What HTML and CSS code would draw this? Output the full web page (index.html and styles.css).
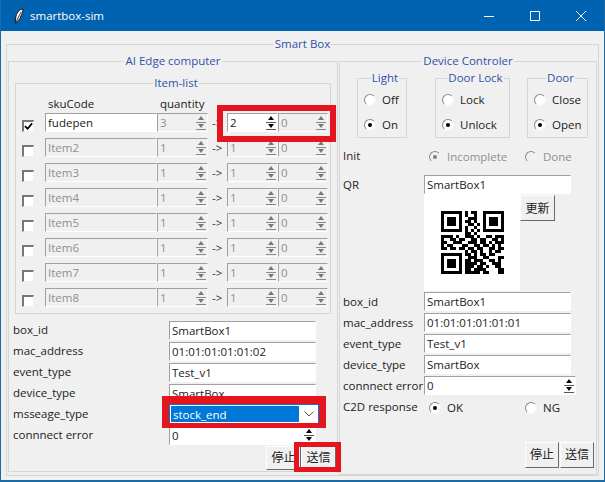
FILE: index.html
```html
<!DOCTYPE html>
<html lang="en">
<head>
  <meta charset="UTF-8" />
  <title>smartbox-sim</title>
  <link rel="stylesheet" href="styles.css">
</head>
<body>
  <div class="window">
    <div class="titlebar">
      <svg class="feather" width="10" height="16" viewBox="0 0 10 16"><path d="M9 1C6 1 3 4 2 8L1 15 2 15C3 13 6 12 7 8 8 6 9 3 9 1Z" fill="#fff" stroke="#111" stroke-width="1"/><path d="M7 4L2 14" stroke="#111" stroke-width=".8"/></svg>
      <span class="app-name">smartbox-sim</span>
      <svg class="win-btn" width="10" height="10" viewBox="0 0 10 10"><path d="M0 5.5h10" stroke="#fff"/></svg>
      <svg class="win-btn" width="10" height="10" viewBox="0 0 10 10"><path d="M.5.5h9v9h-9z" fill="none" stroke="#fff"/></svg>
      <svg class="win-btn" width="10" height="10" viewBox="0 0 10 10"><path d="M0 0l10 10M10 0L0 10" stroke="#fff"/></svg>
    </div>

    <fieldset class="group smartbox">
      <legend>Smart Box</legend>
      <div class="columns">

        <fieldset class="group edge">
          <legend>AI Edge computer</legend>
          <fieldset class="group item-list">
            <legend>Item-list</legend>
            <div class="item-head"><span></span><span class="sku-title">skuCode</span><span class="qty-title">quantity</span></div>
            <div class="items">
              <span class="check on"><svg width="10" height="9" viewBox="0 0 10 9"><path d="M1 4l3 3 5-6" fill="none" stroke="#000" stroke-width="2"/></svg></span>
              <div class="entry">fudepen</div>
              <div class="entry spin off">3<span class="arrows"><i></i><i></i></span></div>
              <span class="dash">-&gt;</span>
              <div class="entry spin">2<span class="arrows"><i></i><i></i></span></div>
              <div class="entry spin off">0<span class="arrows"><i></i><i></i></span></div>

              <span class="check"></span><div class="entry off">Item2</div>
              <div class="entry spin off">1<span class="arrows"><i></i><i></i></span></div><span class="dash">-&gt;</span>
              <div class="entry spin off">1<span class="arrows"><i></i><i></i></span></div>
              <div class="entry spin off">0<span class="arrows"><i></i><i></i></span></div>

              <span class="check"></span><div class="entry off">Item3</div>
              <div class="entry spin off">1<span class="arrows"><i></i><i></i></span></div><span class="dash">-&gt;</span>
              <div class="entry spin off">1<span class="arrows"><i></i><i></i></span></div>
              <div class="entry spin off">0<span class="arrows"><i></i><i></i></span></div>

              <span class="check"></span><div class="entry off">Item4</div>
              <div class="entry spin off">1<span class="arrows"><i></i><i></i></span></div><span class="dash">-&gt;</span>
              <div class="entry spin off">1<span class="arrows"><i></i><i></i></span></div>
              <div class="entry spin off">0<span class="arrows"><i></i><i></i></span></div>

              <span class="check"></span><div class="entry off">Item5</div>
              <div class="entry spin off">1<span class="arrows"><i></i><i></i></span></div><span class="dash">-&gt;</span>
              <div class="entry spin off">1<span class="arrows"><i></i><i></i></span></div>
              <div class="entry spin off">0<span class="arrows"><i></i><i></i></span></div>

              <span class="check"></span><div class="entry off">Item6</div>
              <div class="entry spin off">1<span class="arrows"><i></i><i></i></span></div><span class="dash">-&gt;</span>
              <div class="entry spin off">1<span class="arrows"><i></i><i></i></span></div>
              <div class="entry spin off">0<span class="arrows"><i></i><i></i></span></div>

              <span class="check"></span><div class="entry off">Item7</div>
              <div class="entry spin off">1<span class="arrows"><i></i><i></i></span></div><span class="dash">-&gt;</span>
              <div class="entry spin off">1<span class="arrows"><i></i><i></i></span></div>
              <div class="entry spin off">0<span class="arrows"><i></i><i></i></span></div>

              <span class="check"></span><div class="entry off">Item8</div>
              <div class="entry spin off">1<span class="arrows"><i></i><i></i></span></div><span class="dash">-&gt;</span>
              <div class="entry spin off">1<span class="arrows"><i></i><i></i></span></div>
              <div class="entry spin off">0<span class="arrows"><i></i><i></i></span></div>
            </div>
          </fieldset>

          <div class="form edge-form">
            <span>box_id</span><div class="entry">SmartBox1</div>
            <span>mac_address</span><div class="entry">01:01:01:01:01:02</div>
            <span>event_type</span><div class="entry">Test_v1</div>
            <span>device_type</span><div class="entry">SmartBox</div>
            <span>msseage_type</span>
            <div class="combo"><span class="combo-value">stock_end</span><svg width="10" height="6" viewBox="0 0 10 6"><path d="M.5.5L5 5 9.500.5" fill="none" stroke="#555"/></svg></div>
            <span>connnect error</span><div class="entry spin">0<span class="arrows"><i></i><i></i></span></div>
          </div>
          <div class="actions edge-actions">
            <button>停止</button>
            <button class="send">送信</button>
          </div>
        </fieldset>

        <fieldset class="group device">
          <legend>Device Controler</legend>
          <div class="switches">
            <fieldset class="group switch light">
              <legend>Light</legend>
              <label><span class="radio"></span>Off</label>
              <label><span class="radio on"></span>On</label>
            </fieldset>
            <fieldset class="group switch lock">
              <legend>Door Lock</legend>
              <label><span class="radio"></span>Lock</label>
              <label><span class="radio on"></span>Unlock</label>
            </fieldset>
            <fieldset class="group switch door">
              <legend>Door</legend>
              <label><span class="radio"></span>Close</label>
              <label><span class="radio on"></span>Open</label>
            </fieldset>
          </div>

          <div class="form choice-row init-row">
            <span>Init</span>
            <label class="muted"><span class="radio on"></span>Incomplete</label>
            <label class="muted"><span class="radio"></span>Done</label>
          </div>

          <div class="form qr-form">
            <span>QR</span><div class="entry">SmartBox1</div>
            <span></span>
            <div class="qr-row">
              <div class="qr">
                <svg width="63" height="63" viewBox="0 0 21 21" shape-rendering="crispEdges"><path stroke="#000" d="M0 .5h7M8 .5h1M10 .5h2M14 .5h7M0 1.500h1M6 1.500h1M8 1.500h1M11 1.500h1M14 1.500h1M20 1.500h1M0 2.500h1M2 2.500h3M6 2.500h1M9 2.500h3M14 2.500h1M16 2.500h3M20 2.500h1M0 3.500h1M2 3.500h3M6 3.500h1M8 3.500h2M11 3.500h1M14 3.500h1M16 3.500h3M20 3.500h1M0 4.500h1M2 4.500h3M6 4.500h1M9 4.500h2M12 4.500h1M14 4.500h1M16 4.500h3M20 4.500h1M0 5.500h1M6 5.500h1M8 5.500h1M11 5.500h1M14 5.500h1M20 5.500h1M0 6.500h7M8 6.500h1M10 6.500h1M12 6.500h1M14 6.500h7M8 7.500h2M11 7.500h1M0 8.500h4M5 8.500h1M8 8.500h3M12 8.500h1M15 8.500h2M18 8.500h3M0 9.500h1M3 9.500h2M6 9.500h2M10 9.500h2M13 9.500h2M17 9.500h2M20 9.500h1M0 10.500h2M4 10.500h3M9 10.500h3M13 10.500h2M16 10.500h1M18 10.500h3M0 11.500h1M2 11.500h2M7 11.500h2M11 11.500h2M14 11.500h2M17 11.500h1M19 11.500h1M0 12.500h2M3 12.500h2M6 12.500h2M9 12.500h2M12 12.500h2M16 12.500h2M19 12.500h2M8 13.500h1M10 13.500h2M13 13.500h1M16 13.500h1M18 13.500h2M0 14.500h7M8 14.500h2M11 14.500h1M13 14.500h2M16 14.500h2M0 15.500h1M6 15.500h1M9 15.500h3M14 15.500h2M19 15.500h2M0 16.500h1M2 16.500h3M6 16.500h1M8 16.500h2M11 16.500h3M16 16.500h2M19 16.500h1M0 17.500h1M2 17.500h3M6 17.500h1M8 17.500h4M13 17.500h2M17 17.500h3M0 18.500h1M2 18.500h3M6 18.500h1M8 18.500h3M12 18.500h2M15 18.500h1M18 18.500h2M0 19.500h1M6 19.500h1M8 19.500h2M11 19.500h4M19 19.500h2M0 20.500h7M8 20.500h5M14 20.500h2M19 20.500h2"/></svg>
              </div>
              <button class="refresh">更新</button>
            </div>
            <span>box_id</span><div class="entry">SmartBox1</div>
            <span>mac_address</span><div class="entry">01:01:01:01:01:01</div>
            <span>event_type</span><div class="entry">Test_v1</div>
            <span>device_type</span><div class="entry">SmartBox</div>
            <span>connnect error</span><div class="entry spin wide">0<span class="arrows"><i></i><i></i></span></div>
          </div>

          <div class="form choice-row c2d-row">
            <span>C2D response</span>
            <label><span class="radio on"></span>OK</label>
            <label><span class="radio"></span>NG</label>
          </div>

          <div class="actions device-actions">
            <button>停止</button>
            <button>送信</button>
          </div>
        </fieldset>
      </div>
    </fieldset>

    <div class="mark mark-qty"></div>
    <div class="mark mark-combo"></div>
    <div class="mark mark-send"></div>
  </div>
</body>
</html>
```

FILE: styles.css
```css
* { box-sizing: border-box; }
html, body { margin: 0; padding: 0; }
body { width: 605px; height: 482px; overflow: hidden; font-family: "Open Sans", "Noto Sans CJK JP", sans-serif; font-size: 11.5px; line-height: 16px; color: #222; }

.window { position: relative; width: 605px; height: 482px; background: #f0f0f0; border: 1px solid #1a6aa8; border-top: 0; border-bottom-width: 2px; overflow: hidden; }

.titlebar { display: flex; align-items: center; height: 31px; margin: 0 -1px; padding-left: 14px; background: #0063b1; color: #fff; }
.feather { margin-right: 6px; }
.app-name { flex: 1; }
.win-btn { margin-right: 36px; }
.win-btn:last-child { margin-right: 19px; }

.group { margin: 0; padding: 0; min-width: 0; border: 1px solid #d6d6d6; }
.group > legend { margin: 0 auto; padding: 0 1px; color: #2f52a8; line-height: 16px; }

.smartbox { width: 593px; margin: 5px 0 0 5px; }
.columns { display: flex; align-items: flex-start; margin-top: 1px; padding-left: 1px; gap: 1px; }

.edge { width: 330px; }
.item-list { width: 316px; margin: 6px 0 0 6px; padding: 4px 0 6px 6px; }

.item-head, .items { display: grid; grid-template-columns: 23px 112px 51px 19px 51px 50px; }
.item-head { height: 18px; line-height: 18px; }
.sku-title { padding-left: 3px; }
.qty-title { padding-left: 3px; white-space: nowrap; }
.items { row-gap: 6px; }

.entry { position: relative; height: 19px; padding-left: 2px; line-height: 18px; background: #fff; border: 1px solid #fff; border-top-color: #a0a0a0; border-left-color: #a0a0a0; white-space: nowrap; }
.entry.off { background: #f0f0f0; color: #8f8f8f; border-right-color: #f8f8f8; }

.arrows { position: absolute; top: 1px; right: 1px; display: flex; flex-direction: column; width: 10px; height: 15px; }
.arrows i { position: relative; flex: 1; border-bottom: 1px solid #555; }
.arrows i::before { content: ""; position: absolute; top: 1px; left: 2px; border: 3px solid transparent; border-top: 0; border-bottom: 4px solid #000; }
.arrows i:last-child::before { border-bottom: 0; border-top: 4px solid #000; }
.spin.off .arrows i { border-bottom-color: #888; }
.spin.off .arrows i::before { border-bottom-color: #777; }
.spin.off .arrows i:last-child::before { border-top-color: #777; border-bottom-color: transparent; }
.spin.wide { width: 152px; }

.check { display: flex; align-items: center; justify-content: center; align-self: end; width: 12px; height: 12px; background: #fff; border: 1px solid #f0f0f0; border-top: 2px solid #777; border-left: 2px solid #777; }
.check.on svg { display: block; }
.dash { padding-left: 4px; color: #333; line-height: 19px; height: 19px; }

.form { display: grid; grid-template-columns: 156px 147px; row-gap: 2px; line-height: 19px; white-space: nowrap; }
.edge-form { margin: 7px 0 0 4px; }
.edge-form > span { line-height: 18px; }

.combo { display: flex; align-items: center; justify-content: space-between; width: 150px; height: 20px; margin-top: -1px; padding: 1px 4px 1px 1px; background: #fff; border: 1px solid #0078d7; }
.combo-value { width: 128px; height: 100%; padding-left: 2px; line-height: 17px; background: #0078d7; color: #fff; }

.actions { display: flex; justify-content: flex-end; }
.actions button { height: 24px; padding: 0; font: inherit; font-size: 12px; color: #222; background: #f0f0f0; border: 1px solid; border-color: #fff #696969 #696969 #fff; }
.edge-actions { margin: 1px 1px 1px 0; }
.edge-actions button { width: 35px; }
.device-actions { margin: 25px 2px 6px 0; gap: 1px; }
.device-actions button { width: 34px; height: 26px; }

.device { width: 258px; }
.switches { display: flex; margin: 1px 0 0 17px; }
.switch { flex: none; height: 68px; padding-left: 6px; }
.switch.light { width: 50px; margin-right: 28px; }
.switch.lock { width: 75px; margin-right: 17px; }
.switch.door { width: 61px; }
.switch label { display: flex; align-items: center; height: 25px; }
.switch label:first-of-type { margin-top: 1px; }

.radio { position: relative; flex: none; width: 12px; height: 12px; margin-right: 6px; background: #fff; border: 1px solid; border-color: #8a8a8a #f4f4f4 #f4f4f4 #8a8a8a; border-radius: 50%; }
.radio.on::after { content: ""; position: absolute; top: 3px; left: 3px; width: 4px; height: 4px; background: #000; border-radius: 50%; }

.choice-row { grid-template-columns: 86px 96px auto; align-items: center; margin-left: 3px; }
.choice-row label { display: flex; align-items: center; }
.init-row { margin-top: 9px; height: 19px; }
.init-row > span { margin-top: -3px; }
.muted { color: #8f8f8f; }
.muted .radio { background: #f0f0f0; }
.muted .radio.on::after { background: #808080; }
.c2d-row { margin-top: 3px; height: 19px; }
.c2d-row > span { margin-top: -2px; }

.qr-form { grid-template-columns: 81px 147px; margin: 9px 0 0 3px; row-gap: 2px; }
.qr-row { display: flex; height: 97px; margin-top: -2px; margin-bottom: -1px; }
.qr { display: flex; align-items: center; justify-content: center; width: 96px; background: #fff; }
.refresh { width: 35px; height: 26px; margin-top: 1px; padding: 0; font: inherit; font-size: 12px; color: #222; background: #f0f0f0; border: 1px solid; border-color: #fff #696969 #696969 #fff; }

.mark { position: absolute; border: 6px solid #e4151f; }
.mark-qty { left: 216px; top: 105px; width: 119px; height: 37px; }
.mark-combo { left: 161px; top: 396px; width: 164px; height: 32px; border-width: 8px 7px 5px; }
.mark-send { left: 293px; top: 442px; width: 47px; height: 30px; border-width: 5px; }
```
